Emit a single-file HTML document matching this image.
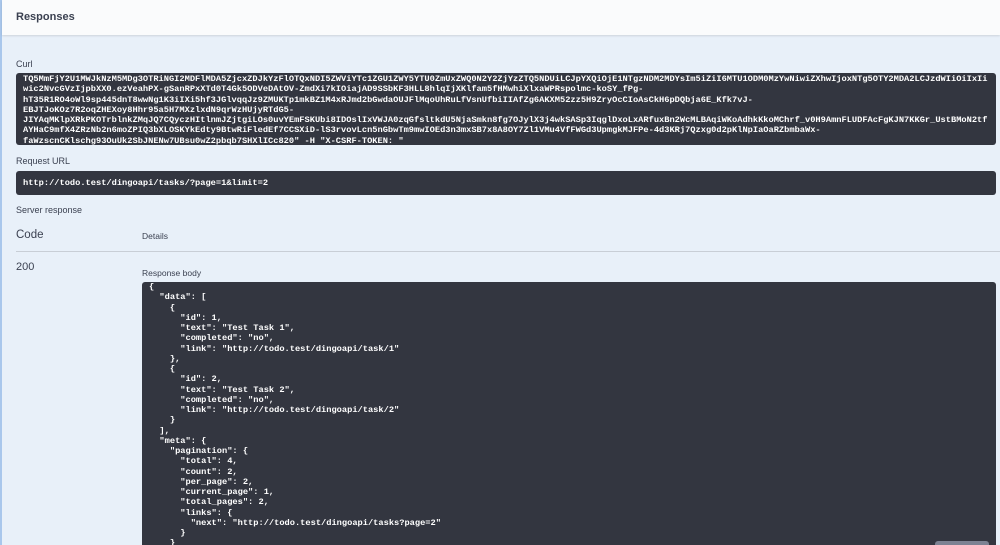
<!DOCTYPE html>
<html style="overflow:hidden;width:1000px;height:545px"><head><meta charset="utf-8"><style>
*{margin:0;padding:0;box-sizing:border-box}
body{width:1000px;height:545px;overflow:hidden;background:#e8f0f9;font-family:"Liberation Sans",sans-serif;color:#3b4151;position:relative}
.lb{position:absolute;left:0;top:0;width:2px;height:545px;background:#a9c7ec}
.hdr{position:absolute;left:2px;top:0;width:998px;height:35px;background:#fafbfc;box-shadow:0 1px 2px rgba(0,0,0,.12)}
.hdr span{position:absolute;left:14px;top:11px;font-size:11px;font-weight:bold;color:#3b4151}
.lbl{position:absolute;font-size:9px;color:#3b4151}
.blk{position:absolute;background:#333640;border-radius:3px;color:#fff;font-family:"Liberation Mono",monospace;font-weight:bold;font-size:8.7px;white-space:pre;overflow:hidden}
</style></head><body>
<div class="lb"></div>
<div class="hdr"><span>Responses</span></div>
<div class="lbl" style="left:16px;top:59px">Curl</div>
<div class="blk" style="left:16px;top:73px;width:980px;height:72px;padding:1px 7px;line-height:10.3px">TQ5MmFjY2U1MWJkNzM5MDg3OTRiNGI2MDFlMDA5ZjcxZDJkYzFlOTQxNDI5ZWViYTc1ZGU1ZWY5YTU0ZmUxZWQ0N2Y2ZjYzZTQ5NDUiLCJpYXQiOjE1NTgzNDM2MDYsIm5iZiI6MTU1ODM0MzYwNiwiZXhwIjoxNTg5OTY2MDA2LCJzdWIiOiIxIi
wic2NvcGVzIjpbXX0.ezVeahPX-gSanRPxXTd0T4Gk5ODVeDAtOV-ZmdXi7kIOiajAD9SSbKF3HLL8hlqIjXKlfam5fHMwhiXlxaWPRspolmc-koSY_fPg-
hT35R1RO4oWl9sp445dnT8wwNg1K3iIXi5hf3JGlvqqJz9ZMUKTp1mkBZ1M4xRJmd2bGwdaOUJFlMqoUhRuLfVsnUfbiIIAfZg6AKXM52zz5H9ZryOcCIoAsCkH6pDQbja6E_Kfk7vJ-
EBJTJoKOz7R2oqZHEXoy8Hhr95a5H7MXzlxdN9qrWzHUjyRTdG5-
JIYAqMKlpXRkPKOTrblnkZMqJQ7CQyczHItlnmJZjtgiLOs0uvYEmFSKUbi8IDOslIxVWJA0zqGfsltkdU5NjaSmkn8fg7OJylX3j4wkSASp3IqglDxoLxARfuxBn2WcMLBAqiWKoAdhkKkoMChrf_v0H9AmnFLUDFAcFgKJN7KKGr_UstBMoN2tf
AYHaC9mfX4ZRzNb2n6moZPIQ3bXLOSKYkEdty9BtwRiFledEf7CCSXiD-lS3rvovLcn5nGbwTm9mwIOEd3n3mxSB7x8A8OY7Zl1VMu4VfFWGd3UpmgkMJFPe-4d3KRj7Qzxg0d2pKlNpIaOaRZbmbaWx-
faWzscnCKlschg93OuUk2SbJNENw7UBsu0wZ2pbqb7SHXlICc820" -H "X-CSRF-TOKEN: "</div>
<div class="lbl" style="left:16px;top:156px">Request URL</div>
<div class="blk" style="left:16px;top:171px;width:980px;height:24px;padding:8px 7px;line-height:9px">http://todo.test/dingoapi/tasks/?page=1&amp;limit=2</div>
<div class="lbl" style="left:16px;top:205px">Server response</div>
<div class="lbl" style="left:16px;top:229px;font-size:11.5px">Code</div>
<div class="lbl" style="left:142px;top:231px;font-size:8.5px">Details</div>
<div style="position:absolute;left:16px;top:251px;width:984px;height:1px;background:#c8ced6"></div>
<div class="lbl" style="left:16px;top:261px;font-size:11px">200</div>
<div class="lbl" style="left:142px;top:268px;font-size:8.5px">Response body</div>
<div class="blk" style="left:142px;top:282px;width:854px;height:263px;padding:0 7px;line-height:10.25px;border-radius:3px 3px 0 0">{
  "data": [
    {
      "id": 1,
      "text": "Test Task 1",
      "completed": "no",
      "link": "http://todo.test/dingoapi/task/1"
    },
    {
      "id": 2,
      "text": "Test Task 2",
      "completed": "no",
      "link": "http://todo.test/dingoapi/task/2"
    }
  ],
  "meta": {
    "pagination": {
      "total": 4,
      "count": 2,
      "per_page": 2,
      "current_page": 1,
      "total_pages": 2,
      "links": {
        "next": "http://todo.test/dingoapi/tasks?page=2"
      }
    }</div>
<div style="position:absolute;left:935px;top:541px;width:54px;height:4px;background:#7d8293;border-radius:3px 3px 0 0"></div>
</body></html>
